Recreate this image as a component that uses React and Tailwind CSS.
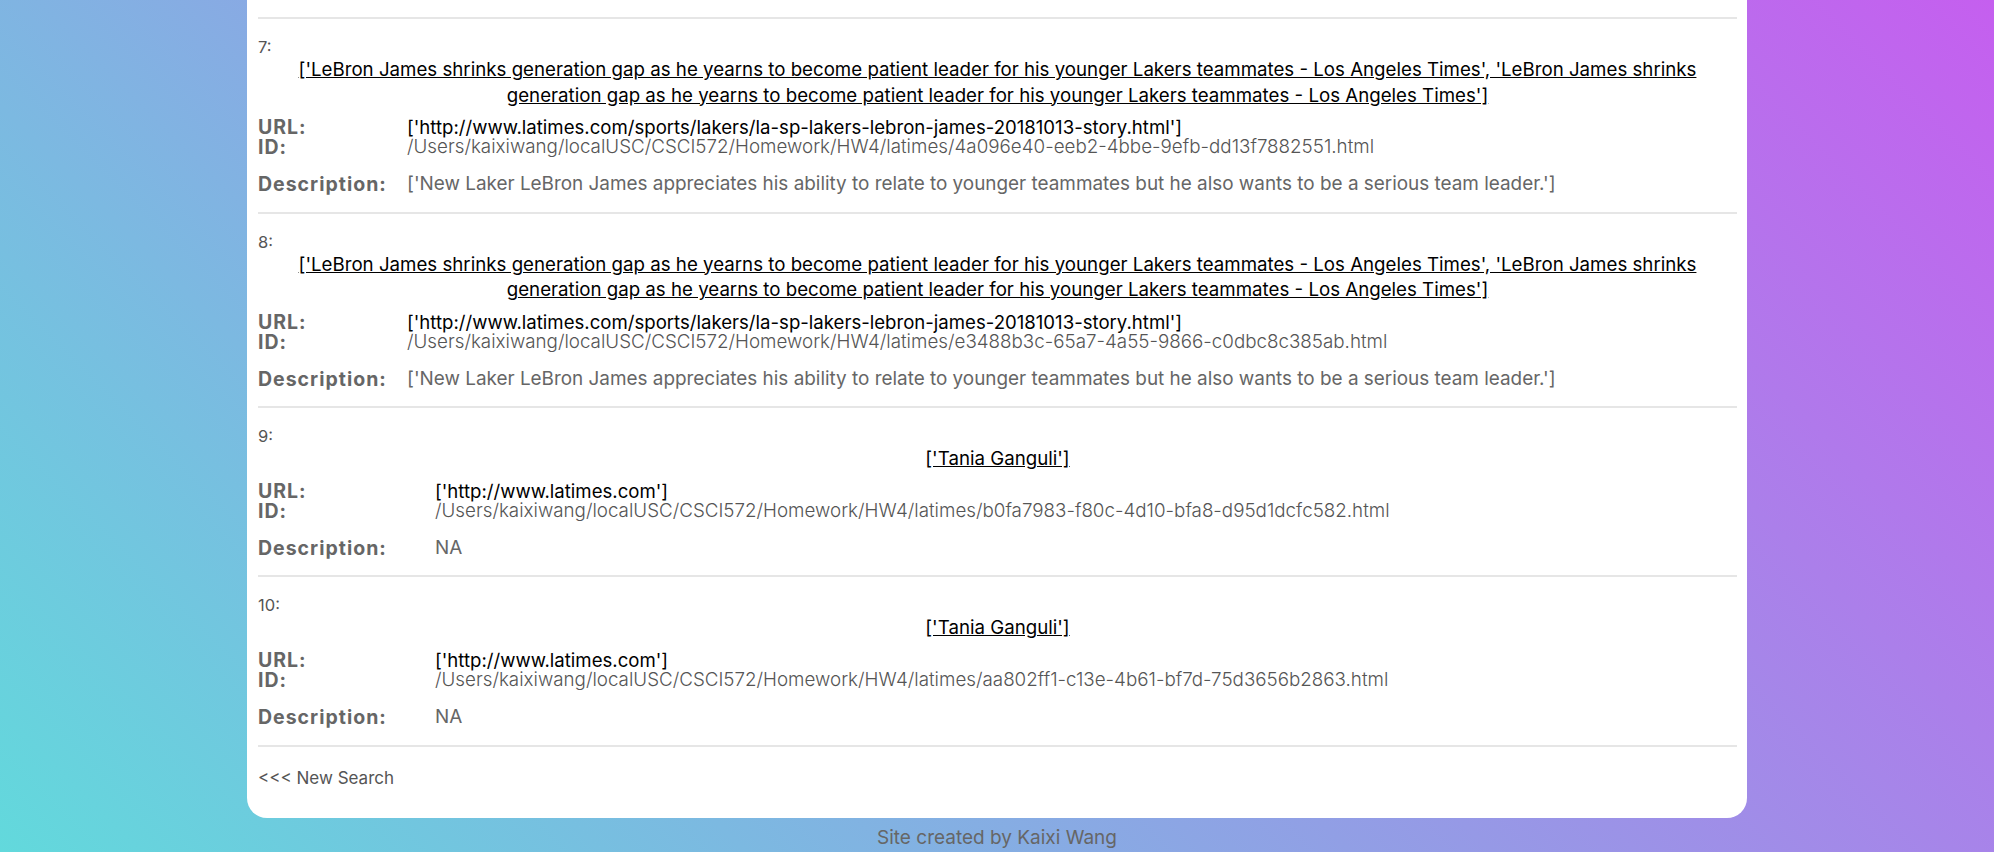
import React from "react";

const lebron =
  "['LeBron James shrinks generation gap as he yearns to become patient leader for his younger Lakers teammates - Los Angeles Times', 'LeBron James shrinks";
const lebron2 =
  "generation gap as he yearns to become patient leader for his younger Lakers teammates - Los Angeles Times']";
const lebronUrl = "['http://www.latimes.com/sports/lakers/la-sp-lakers-lebron-james-20181013-story.html']";
const lebronDesc =
  "['New Laker LeBron James appreciates his ability to relate to younger teammates but he also wants to be a serious team leader.']";

const results = [
  {
    n: 7,
    title: [lebron, lebron2],
    url: lebronUrl,
    id: "/Users/kaixiwang/localUSC/CSCI572/Homework/HW4/latimes/4a096e40-eeb2-4bbe-9efb-dd13f7882551.html",
    desc: lebronDesc,
    labelW: "w-[149px]",
  },
  {
    n: 8,
    title: [lebron, lebron2],
    url: lebronUrl,
    id: "/Users/kaixiwang/localUSC/CSCI572/Homework/HW4/latimes/e3488b3c-65a7-4a55-9866-c0dbc8c385ab.html",
    desc: lebronDesc,
    labelW: "w-[149px]",
  },
  {
    n: 9,
    title: ["['Tania Ganguli']"],
    url: "['http://www.latimes.com']",
    id: "/Users/kaixiwang/localUSC/CSCI572/Homework/HW4/latimes/b0fa7983-f80c-4d10-bfa8-d95d1dcfc582.html",
    desc: "NA",
    labelW: "w-[177px]",
  },
  {
    n: 10,
    title: ["['Tania Ganguli']"],
    url: "['http://www.latimes.com']",
    id: "/Users/kaixiwang/localUSC/CSCI572/Homework/HW4/latimes/aa802ff1-c13e-4b61-bf7d-75d3656b2863.html",
    desc: "NA",
    labelW: "w-[177px]",
  },
];

const label = "shrink-0 text-[19.5px] font-bold tracking-[1px] text-[#666]";

function Result({ item }) {
  return (
    <div className="border-t-2 border-[#e6e6e6] pb-[17.5px]">
      <div className="mt-[18px] text-[16.5px] leading-[20px] text-[#555]">{item.n}:</div>
      <div className="text-center text-[18.7px] leading-[25.6px] text-black">
        <a href="#" className="underline">
          {item.title.map((line, i) => (
            <React.Fragment key={i}>
              {i > 0 && <br />}
              {line}
            </React.Fragment>
          ))}
        </a>
      </div>
      <div className="mt-[9px] flex text-[18.6px] leading-[20px]">
        <div className={`${item.labelW} ${label}`}>URL:</div>
        <div className="text-black">{item.url}</div>
      </div>
      <div className="flex text-[18.8px] leading-[20px]">
        <div className={`${item.labelW} ${label}`}>ID:</div>
        <div className="font-light text-[#555]">{item.id}</div>
      </div>
      <div className="mt-[17px] flex text-[18.9px] leading-[20px]">
        <div className={`${item.labelW} ${label}`}>Description:</div>
        <div className="text-[#666]">{item.desc}</div>
      </div>
    </div>
  );
}

export default function App() {
  return (
    <div className="min-h-screen flex flex-col overflow-hidden bg-[linear-gradient(45deg,#62d9dc,#c55fef)] font-['Inter',sans-serif]">
      <div className="mx-auto w-[1500px] rounded-b-[20px] bg-white pl-[11px] pr-[10px] pb-[30px]">
        {/* tail of result 6, scrolled off the top */}
        <div className="-mt-[21px] flex pb-[18px] text-[18.9px] leading-[20px]">
          <div className={`w-[177px] ${label}`}>Description:</div>
          <div className="text-[#666]">NA</div>
        </div>
        {results.map((r) => (
          <Result key={r.n} item={r} />
        ))}
        <div className="border-t-2 border-[#e6e6e6] pt-[21px] leading-[20px]">
          <a href="#" className="text-[17px] text-[#555]">
            &lt;&lt;&lt; New Search
          </a>
        </div>
      </div>
      <div className="mt-[10px] text-center text-[19px] leading-[20px] text-[#666]">Site created by Kaixi Wang</div>
    </div>
  );
}
